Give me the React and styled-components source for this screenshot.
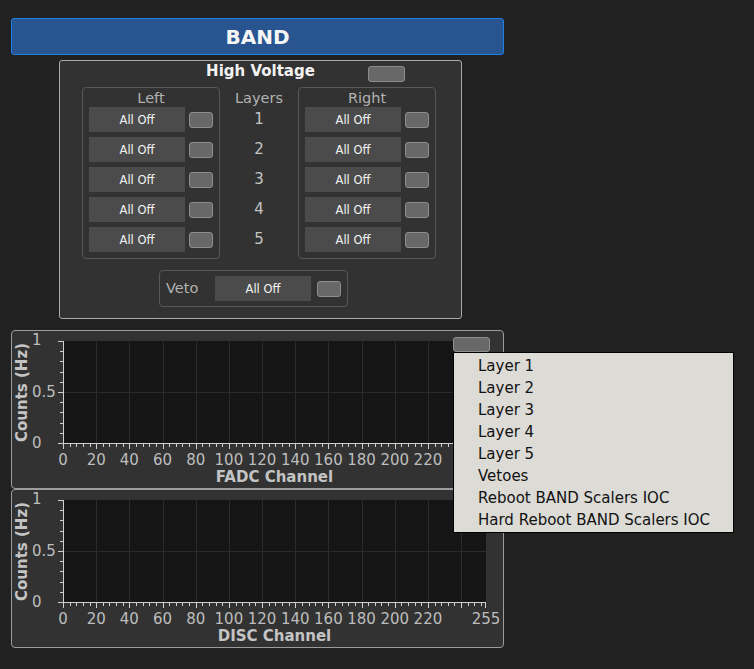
import React from 'react';
import styled, { createGlobalStyle } from 'styled-components';

const GlobalStyle = createGlobalStyle`
  html, body { margin: 0; padding: 0; background: #212121; }
  body { font-family: "DejaVu Sans", "Liberation Sans", sans-serif; }
  * { box-sizing: border-box; }
`;

const Page = styled.div`
  display: flex;
  flex-direction: column;
  align-items: flex-start;
  padding: 18px 0 0 11px;
  width: 504px;
`;

const Header = styled.div`
  width: 493px;
  height: 37px;
  border: 1px solid #1f7fe8;
  border-radius: 3px;
  background: #285590;
  color: #f6f6f6;
  font-weight: bold;
  font-size: 20px;
  display: flex;
  align-items: center;
  justify-content: center;
`;

const HVPanel = styled.section`
  margin: 5px 0 0 48px;
  width: 403px;
  height: 259px;
  border: 1px solid #a9a9a9;
  border-radius: 3px;
  background: #323232;
  display: flex;
  flex-direction: column;
`;

const TitleRow = styled.div`
  display: grid;
  grid-template-columns: 1fr auto 1fr;
  align-items: start;
  padding-top: 2px;
`;

const PanelTitle = styled.div`
  grid-column: 2;
  font-size: 15px;
  font-weight: bold;
  line-height: 17px;
  color: #f2f2f2;
`;

const Toggle = styled.button`
  width: ${p => p.$w || 24}px;
  height: ${p => p.$h || 16}px;
  margin: ${p => p.$m || 0};
  padding: 0;
  border: 1px solid #8d8d8d;
  border-radius: 3px;
  background: #686868;
  flex: none;
  justify-self: start;
`;

const GroupsRow = styled.div`
  display: flex;
  margin-top: 5px;
  padding-left: 22px;
`;

const GroupBox = styled.div`
  width: 138px;
  height: 172px;
  border: 1px solid #585858;
  border-radius: 4px;
  padding: 0 6px;
  display: flex;
  flex-direction: column;
  gap: 5px;
`;

const GroupLabel = styled.div`
  height: 19px;
  line-height: 19px;
  padding-top: 1px;
  text-align: center;
  font-size: 14.5px;
  color: #b2b2b2;
  margin-bottom: -5px;
`;

const LayersColumn = styled.div`
  width: 78px;
  padding-top: 1px;
  display: flex;
  flex-direction: column;
  gap: 5px;
  align-items: center;
`;

const LayerNum = styled.div`
  height: 25px;
  line-height: 25px;
  font-size: 15px;
  color: #c4c4c4;
`;

const Row = styled.div`
  display: flex;
  align-items: center;
  gap: 4px;
  height: 25px;
`;

const AllOff = styled.button`
  width: 96px;
  height: 25px;
  padding: 0;
  border: none;
  background: #4b4b4b;
  color: #f4f4f4;
  font-family: "DejaVu Sans", sans-serif;
  font-size: 11.5px;
  flex: none;
`;

const VetoBox = styled.div`
  margin: 11px 0 0 99px;
  width: 189px;
  height: 37px;
  border: 1px solid #585858;
  border-radius: 4px;
  padding: 0 6px;
  display: flex;
  align-items: center;
`;

const VetoLabel = styled.div`
  width: 49px;
  font-size: 14.5px;
  line-height: 17px;
  margin-top: -1px;
  color: #b2b2b2;
`;

const PlotPanel = styled.section`
  position: relative;
  margin-top: ${p => p.$mt || 0}px;
  width: 493px;
  height: 159px;
  border: 1px solid #9c9c9c;
  border-radius: 4px;
  background: #323232;
  display: grid;
  grid-template-columns: 20px 470px;
  grid-template-rows: 137px 1fr;
`;

const YTitle = styled.div`
  display: flex;
  align-items: center;
  justify-content: center;
  padding-bottom: 15px;
`;

const YTitleText = styled.span`
  writing-mode: vertical-rl;
  transform: rotate(180deg);
  font-size: 15px;
  font-weight: bold;
  color: #c4c4c4;
  line-height: 20px;
  white-space: nowrap;
`;

const XTitle = styled.div`
  grid-column: 2;
  margin-left: 31px;
  width: 423px;
  text-align: center;
  font-size: 15px;
  font-weight: bold;
  color: #c4c4c4;
  line-height: 19px;
`;

const MenuAnchor = styled.div`
  position: absolute;
  top: 5px;
  left: 441px;
  z-index: 10;
`;

const Menu = styled.ul`
  position: absolute;
  top: 16px;
  left: 0;
  margin: 0;
  width: 281px;
  height: 181px;
  padding: 2px 0 1px 24px;
  list-style: none;
  background: #dcdbd6;
  border: 1px solid #000;
`;

const MenuItem = styled.li`
  height: 22px;
  line-height: 22px;
  font-size: 15px;
  color: #121212;
  white-space: nowrap;
`;

const W = 470;
const H = 137;
const PX0 = 31;
const PX1 = 454;
const PY0 = 10;
const PY1 = 112;
const xOf = c => PX0 + (c * (PX1 - PX0)) / 255;

function Chart() {
  const gridX = [];
  for (let c = 20; c <= 240; c += 20) gridX.push(c);
  const minorX = [];
  for (let c = 0; c <= 252; c += 4) minorX.push(c);
  const labelsX = [0, 20, 40, 60, 80, 100, 120, 140, 160, 180, 200, 220, 255];
  const yTicks = [];
  for (let i = 0; i <= 10; i++) yTicks.push(i);
  return (
    <svg width={W} height={H} viewBox={`0 0 ${W} ${H}`} shapeRendering="crispEdges">
      <rect x={PX0} y={PY0} width={PX1 - PX0} height={PY1 - PY0} fill="#151515" />
      {gridX.map(c => (
        <line key={'g' + c} x1={Math.round(xOf(c)) + 0.5} x2={Math.round(xOf(c)) + 0.5} y1={PY0} y2={PY1} stroke="#2b2b2b" />
      ))}
      <line x1={PX0} x2={PX1} y1={61.5} y2={61.5} stroke="#2b2b2b" />
      <line x1={PX0 + 0.5} x2={PX0 + 0.5} y1={PY0} y2={PY1 + 1} stroke="#cfcfcf" />
      <line x1={PX0} x2={PX1} y1={PY1 + 0.5} y2={PY1 + 0.5} stroke="#cfcfcf" />
      {yTicks.map(i => {
        const y = Math.round(PY0 + (i * (PY1 - PY0)) / 10) + 0.5;
        const major = i % 5 === 0;
        return <line key={'yt' + i} x1={major ? PX0 - 5 : PX0 - 3} x2={PX0} y1={y} y2={y} stroke="#cfcfcf" />;
      })}
      {minorX.map(c => {
        const x = Math.round(xOf(c)) + 0.5;
        const major = c % 20 === 0;
        return <line key={'xt' + c} x1={x} x2={x} y1={PY1} y2={PY1 + (major ? 6 : 4)} stroke="#cfcfcf" />;
      })}
      <line x1={PX1 - 0.5} x2={PX1 - 0.5} y1={PY1} y2={PY1 + 6} stroke="#cfcfcf" />
      <g fill="#bdbdbd" fontFamily="DejaVu Sans, sans-serif" fontSize="15">
        <text x={0} y={9} dominantBaseline="central">1</text>
        <text x={0} y={61} dominantBaseline="central">0.5</text>
        <text x={0} y={112} dominantBaseline="central">0</text>
        {labelsX.map(c => (
          <text key={'l' + c} x={xOf(c)} y={129} textAnchor="middle" dominantBaseline="central">{c}</text>
        ))}
      </g>
    </svg>
  );
}

function Plot({ title, withMenu, mt }) {
  const items = ['Layer 1', 'Layer 2', 'Layer 3', 'Layer 4', 'Layer 5', 'Vetoes', 'Reboot BAND Scalers IOC', 'Hard Reboot BAND Scalers IOC'];
  return (
    <PlotPanel $mt={mt}>
      <YTitle><YTitleText>Counts (Hz)</YTitleText></YTitle>
      <Chart />
      <XTitle>{title}</XTitle>
      {withMenu && (
        <MenuAnchor>
          <Toggle $w={37} $h={15} />
          <Menu>
            {items.map(t => <MenuItem key={t}>{t}</MenuItem>)}
          </Menu>
        </MenuAnchor>
      )}
    </PlotPanel>
  );
}

function Group({ label }) {
  return (
    <GroupBox>
      <GroupLabel>{label}</GroupLabel>
      {[1, 2, 3, 4, 5].map(n => (
        <Row key={n}>
          <AllOff>All Off</AllOff>
          <Toggle />
        </Row>
      ))}
    </GroupBox>
  );
}

export default function App() {
  return (
    <>
      <GlobalStyle />
      <Page>
        <Header>BAND</Header>
        <HVPanel>
          <TitleRow>
            <PanelTitle>High Voltage</PanelTitle>
            <Toggle $w={37} $h={16} $m="3px 0 0 53px" />
          </TitleRow>
          <GroupsRow>
            <Group label="Left" />
            <LayersColumn>
              <GroupLabel>Layers</GroupLabel>
              {[1, 2, 3, 4, 5].map(n => <LayerNum key={n}>{n}</LayerNum>)}
            </LayersColumn>
            <Group label="Right" />
          </GroupsRow>
          <VetoBox>
            <VetoLabel>Veto</VetoLabel>
            <AllOff>All Off</AllOff>
            <Toggle $m="0 0 0 6px" />
          </VetoBox>
        </HVPanel>
        <Plot title="FADC Channel" withMenu mt={11} />
        <Plot title="DISC Channel" />
      </Page>
    </>
  );
}
